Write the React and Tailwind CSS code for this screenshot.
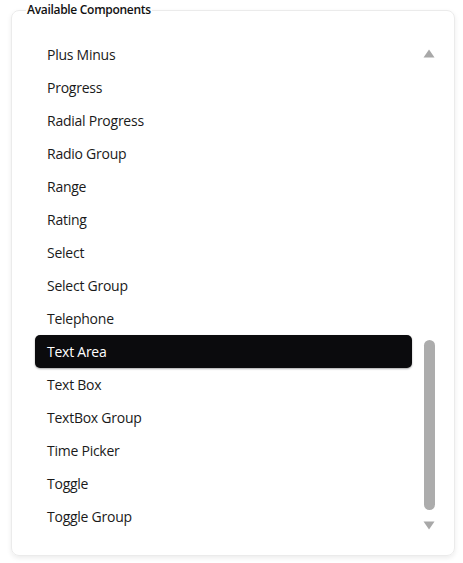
import React from "react";

const items = [
  "Plus Minus",
  "Progress",
  "Radial Progress",
  "Radio Group",
  "Range",
  "Rating",
  "Select",
  "Select Group",
  "Telephone",
  "Text Area",
  "Text Box",
  "TextBox Group",
  "Time Picker",
  "Toggle",
  "Toggle Group",
];

export default function App() {
  return (
    <div
      className="w-[463px] h-[563px] bg-white pl-[11px] pr-[8px] pt-[2px]"
      style={{ fontFamily: '"Open Sans", "Noto Sans", sans-serif' }}
    >
      <fieldset className="w-[444px] h-[554px] border border-[#ebebeb] rounded-lg shadow-[0_2px_5px_rgba(0,0,0,0.08)] pl-[23px] pr-[17px] pt-[20px] pb-[21px] m-0 min-w-0">
        <legend className="-ml-[9px] px-[1px] text-[12px] leading-[16px] font-semibold tracking-[-0.3px] text-[#111]">
          Available Components
        </legend>
        <div className="flex h-[495px]">
          <ul className="flex-1 flex flex-col m-0 p-0 list-none">
            {items.map((it) => (
              <li
                key={it}
                className={
                  it === "Text Area"
                    ? "h-[33px] flex items-center px-3 text-[14px] tracking-[-0.25px] text-white bg-[#0b0b0d] rounded-[5px] shadow-[0_1px_2px_rgba(0,0,0,0.35)]"
                    : "h-[33px] flex items-center px-3 text-[14px] tracking-[-0.25px] text-[#1a1a1a]"
                }
              >
                {it}
              </li>
            ))}
          </ul>
          <div className="w-[16px] ml-[9px] flex flex-col items-center pt-[11px] pb-[3px]">
            <svg width="12" height="9" viewBox="0 0 12 9">
              <path d="M6 0.5 L11.5 8.5 L0.5 8.5 Z" fill="#a8a8a8" />
            </svg>
            <div className="flex-1" />
            <div className="w-[11px] h-[170px] rounded-full bg-[#acacac]" />
            <div className="h-[11px]" />
            <svg width="12" height="9" viewBox="0 0 12 9">
              <path d="M0.5 0.5 L11.5 0.5 L6 8.5 Z" fill="#a8a8a8" />
            </svg>
          </div>
        </div>
      </fieldset>
    </div>
  );
}
